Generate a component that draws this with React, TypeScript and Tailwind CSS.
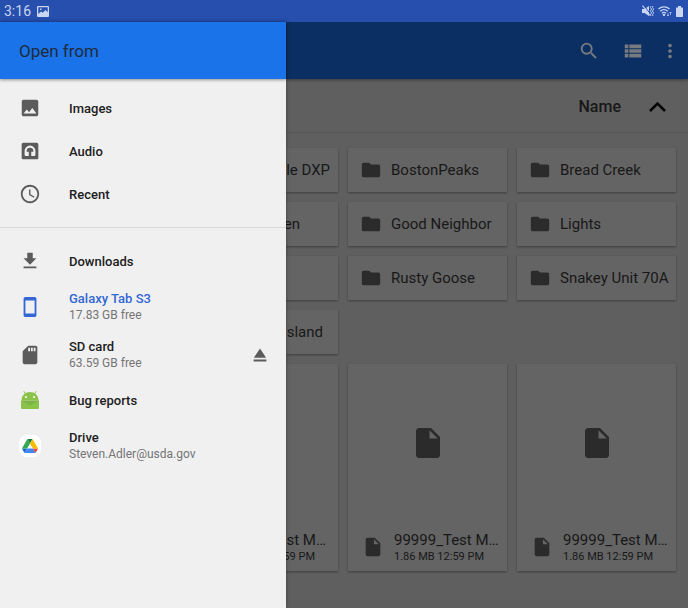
import type { ReactNode } from 'react';

type IconProps = { className?: string; d: string };

function Icon({ className = '', d }: IconProps) {
  return (
    <svg viewBox="0 0 24 24" fill="currentColor" fillRule="evenodd" aria-hidden="true" className={`shrink-0 ${className}`}>
      <path d={d} />
    </svg>
  );
}

const paths = {
  image: 'M21 19V5c0-1.100-.9-2-2-2H5c-1.100 0-2 .9-2 2v14c0 1.100.9 2 2 2h14c1.100 0 2-.9 2-2zM8.500 13.500l2.500 3.010L14.500 12l4.500 6H5l3.500-4.500z',
  recent:
    'M11.990 2C6.470 2 2 6.480 2 12s4.470 10 9.990 10C17.520 22 22 17.520 22 12S17.520 2 11.990 2zM12 20c-4.420 0-8-3.580-8-8s3.580-8 8-8 8 3.580 8 8-3.580 8-8 8zM12.500 7H11v6l5.250 3.150.75-1.230-4.500-2.670z',
  audio:
    'M4 2h16c1.100 0 2 .9 2 2v16c0 1.100-.9 2-2 2H4c-1.100 0-2-.9-2-2V4c0-1.100.9-2 2-2zM12 5.500a6.500 6.500 0 0 0-6.500 6.500v4.500c0 .8.700 1.500 1.500 1.500h3.500v-5H8v-1a4 4 0 0 1 8 0v1h-2.500v5H17c.8 0 1.500-.7 1.500-1.500V12A6.500 6.500 0 0 0 12 5.500z',
  download: 'M19 9h-4V3H9v6H5l7 7 7-7zM5 18v2h14v-2H5z',
  phone: 'M17 1H7c-1.100 0-2 .9-2 2v18c0 1.100.9 2 2 2h10c1.100 0 2-.9 2-2V3c0-1.100-.9-2-2-2zm0 18H7V5h10v14z',
  sd: 'M18 2h-8L4 8v12c0 1.100.9 2 2 2h12c1.100 0 2-.9 2-2V4c0-1.100-.9-2-2-2zm-6 6h-2V4h2v4zm3 0h-2V4h2v4zm3 0h-2V4h2v4z',
  eject: 'M5 17h14v2H5zM12 5L5.330 15h13.340z',
  folder: 'M10 4H4c-1.100 0-2 .9-2 2v12c0 1.100.9 2 2 2h16c1.100 0 2-.9 2-2V8c0-1.100-.9-2-2-2h-8l-2-2z',
  file: 'M6 2c-1.100 0-2 .9-2 2v16c0 1.100.9 2 2 2h12c1.100 0 2-.9 2-2V8l-6-6H6zm7 7V3.500L18.500 9H13z',
  search:
    'M15.500 14h-.79l-.28-.27A6.471 6.471 0 0 0 16 9.500 6.500 6.500 0 1 0 9.500 16c1.610 0 3.090-.59 4.230-1.570l.27.28v.79l5 4.990L20.490 19l-4.990-5zm-6 0C7.010 14 5 11.990 5 9.500S7.010 5 9.500 5 14 7.010 14 9.500 11.990 14 9.500 14z',
  list: 'M3 14h4v-4H3v4zm0 5h4v-4H3v4zM3 9h4V5H3v4zm5 5h13v-4H8v4zm0 5h13v-4H8v4zM8 5v4h13V5H8z',
  more: 'M12 8c1.100 0 2-.9 2-2s-.9-2-2-2-2 .9-2 2 .9 2 2 2zm0 2c-1.100 0-2 .9-2 2s.9 2 2 2 2-.9 2-2-.9-2-2-2zm0 6c-1.100 0-2 .9-2 2s.9 2 2 2 2-.9 2-2-.9-2-2-2z',
};

function AndroidIcon() {
  return (
    <svg viewBox="0 0 20 20" className="h-5 w-5" aria-hidden="true">
      <path d="M4 1.500 5.500 4M16 1.500 14.500 4" stroke="#8bc34a" strokeWidth="1" strokeLinecap="round" />
      <path d="M1.500 10a8.500 8 0 0 1 17 0z" fill="#8bc34a" />
      <circle cx="6" cy="7" r="1" fill="#fff" />
      <circle cx="14" cy="7" r="1" fill="#fff" />
      <path d="M1 10.500h18V18a1 1 0 0 1-1 1H2a1 1 0 0 1-1-1z" fill="#8bc34a" />
      <path d="M1 10.500h18l-9 5z" fill="#7cb342" />
    </svg>
  );
}

function DriveIcon() {
  return (
    <span className="flex h-[22px] w-[22px] items-center justify-center rounded-lg bg-white">
      <svg viewBox="0 0 87.3 78" className="h-[14px] w-4" aria-hidden="true">
        <path d="m6.600 66.850 3.850 6.650c.8 1.400 1.950 2.500 3.300 3.300l13.750-23.800h-27.500c0 1.550.4 3.100 1.200 4.500z" fill="#1967d2" />
        <path d="m43.650 25-13.750-23.800c-1.350.8-2.500 1.900-3.300 3.300l-25.400 44a9.060 9.060 0 0 0 -1.200 4.500h27.500z" fill="#34a853" />
        <path d="m73.550 76.800c1.350-.8 2.500-1.900 3.300-3.300l1.600-2.750 7.650-13.250c.8-1.400 1.200-2.950 1.200-4.500h-27.502l5.852 11.500z" fill="#ea4335" />
        <path d="m43.650 25 13.750-23.800c-1.350-.8-2.900-1.200-4.500-1.200h-18.500c-1.600 0-3.150.45-4.500 1.200z" fill="#188038" />
        <path d="m59.800 53h-32.300l-13.750 23.800c1.350.8 2.900 1.200 4.500 1.200h50.800c1.600 0 3.150-.45 4.500-1.200z" fill="#4285f4" />
        <path d="m73.400 26.500-12.700-22c-.8-1.400-1.950-2.500-3.300-3.300l-13.750 23.800 16.150 28h27.450c0-1.550-.4-3.100-1.200-4.500z" fill="#fbbc04" />
      </svg>
    </span>
  );
}

function StatusBar() {
  return (
    <div className="flex h-[22px] items-center bg-[#264fae] pr-[5px] pl-1 text-[#c9d5f1]">
      <span className="text-sm leading-5">3:16</span>
      <svg viewBox="0 0 12 11" className="ml-[6px] h-[11px] w-3" aria-hidden="true">
        <path fillRule="evenodd" fill="currentColor" d="M1 0h10a1 1 0 0 1 1 1v9a1 1 0 0 1-1 1H1a1 1 0 0 1-1-1V1a1 1 0 0 1 1-1zm.3 1.300v6.700L4 5.500l1.700 1.300L8.500 4l2.200 2.200V1.300zM3 2.500h1.500V4H3z" />
      </svg>
      <div className="ml-auto flex items-center gap-1">
        <svg viewBox="0 0 12 12" className="h-3 w-3" aria-hidden="true" fill="none" stroke="currentColor">
          <path d="M0 4h2.500L7 1v10L2.500 8H0z" fill="currentColor" stroke="none" />
          <path d="m1.500 0 7 9" stroke="#264fae" />
          <path d="m.5.500 7.500 10" strokeWidth="1.200" />
          <path d="m9 1-.5 1.500 1 1.500-1 2 1 2-1 1.500L9 11M11 1l-.5 1.500 1 1.500-1 2 1 2-1 1.500.5 1.500" strokeWidth=".9" />
        </svg>
        <svg viewBox="0 0 14 12" className="h-3 w-3.5" aria-hidden="true" fill="none" stroke="currentColor">
          <path d="M.5 4a8.300 8.300 0 0 1 11 0M2.300 6.200a5.500 5.500 0 0 1 7.400 0M4 8.200a3 3 0 0 1 4 0" strokeWidth="1.300" />
          <path d="M5 9.500h2L6 11z" fill="currentColor" />
          <path d="M10 8v3m-1-1 1 1 1-1M12.500 10V7m-1 1 1-1 1 1" strokeWidth=".7" />
        </svg>
        <svg viewBox="0 0 7 11" className="h-[11px] w-[7px]" aria-hidden="true" fill="currentColor">
          <path d="M2 0h3v1.500h1.500L7 2v8.500l-.5.500h-6L0 10.500V2l.5-.5H2z" />
        </svg>
      </div>
    </div>
  );
}

type RootItemProps = { icon: ReactNode; title: string; detail?: string; active?: boolean };

function RootItem({ icon, title, detail, active }: RootItemProps) {
  return (
    <button type="button" className={`flex min-w-0 flex-1 items-center text-left ${detail ? 'h-12' : 'h-[43px]'}`}>
      <span className="flex w-[59px] shrink-0 justify-center pb-px">{icon}</span>
      <span className="ml-[10px] flex min-w-0 flex-col">
        <span className={`text-[13px] leading-4 font-medium ${active ? 'text-[#3367d6]' : 'text-[#202020]'}`}>{title}</span>
        {detail && <span className="text-xs leading-4 text-[#757575]">{detail}</span>}
      </span>
    </button>
  );
}

function Drawer() {
  const gray = 'text-[#5b5b5b]';
  return (
    <aside className="z-10 flex w-[286px] shrink-0 flex-col bg-[#f0f0f0] shadow-[0_0_4px_rgba(0,0,0,0.35)]">
      <header className="flex h-[57px] items-center bg-[#1a73e8] pl-[19px] shadow-[0_1px_3px_rgba(0,0,0,0.4)]">
        <h1 className="text-[17px] leading-6 text-[#202b3a]">Open from</h1>
      </header>
      <nav aria-label="Storage locations">
        <ul className="border-b border-[#d8d8d8] pt-2 pb-[11px]">
          <li className="flex"><RootItem title="Images" icon={<Icon d={paths.image} className={`h-[22px] w-[22px] ${gray}`} />} /></li>
          <li className="flex"><RootItem title="Audio" icon={<Icon d={paths.audio} className={`h-5 w-5 ${gray}`} />} /></li>
          <li className="flex"><RootItem title="Recent" icon={<Icon d={paths.recent} className={`h-[22px] w-[22px] ${gray}`} />} /></li>
        </ul>
        <ul className="pt-3">
          <li className="flex"><RootItem title="Downloads" icon={<Icon d={paths.download} className={`h-[22px] w-[22px] ${gray}`} />} /></li>
          <li className="flex"><RootItem active title="Galaxy Tab S3" detail="17.83 GB free" icon={<Icon d={paths.phone} className="h-[22px] w-[22px] text-[#3367d6]" />} /></li>
          <li className="flex items-center pr-[15px]">
            <RootItem title="SD card" detail="63.59 GB free" icon={<Icon d={paths.sd} className={`h-[22px] w-[22px] ${gray}`} />} />
            <button type="button" aria-label="Eject SD card"><Icon d={paths.eject} className={`h-[22px] w-[22px] ${gray}`} /></button>
          </li>
          <li className="flex"><RootItem title="Bug reports" icon={<AndroidIcon />} /></li>
          <li className="flex"><RootItem title="Drive" detail="Steven.Adler@usda.gov" icon={<DriveIcon />} /></li>
        </ul>
      </nav>
    </aside>
  );
}

const card = 'bg-[#646464] shadow-[0_1px_2px_rgba(0,0,0,0.35)]';

function Folder({ name }: { name: string }) {
  return (
    <button type="button" className={`flex h-11 items-center pl-3 text-left ${card}`}>
      <Icon d={paths.folder} className="h-[22px] w-[22px] text-[#2b2b2b]" />
      <span className="ml-[9px] text-[15px] leading-5 whitespace-nowrap">{name}</span>
    </button>
  );
}

function ClippedFolder({ name, pad }: { name: string; pad: string }) {
  return (
    <button type="button" className={`flex h-11 items-center justify-end text-[15px] leading-5 whitespace-nowrap ${pad} ${card}`}>
      {name}
    </button>
  );
}

function FileCard() {
  return (
    <button type="button" className={`flex h-[207px] flex-col text-left ${card}`}>
      <span className="flex w-full flex-1 items-center justify-center">
        <Icon d={paths.file} className="h-9 w-9 text-[#2b2b2b]" />
      </span>
      <span className="flex h-[49px] w-full items-start pl-[14px]">
        <Icon d={paths.file} className="mt-[14px] h-[22px] w-[22px] text-[#2b2b2b]" />
        <span className="ml-[10px] flex flex-col pt-2 whitespace-nowrap">
          <span className="text-[15px] leading-5">99999_Test M…</span>
          <span className="text-[11px] leading-[14px]">1.86 MB 12:59 PM</span>
        </span>
      </span>
    </button>
  );
}

function Browser() {
  return (
    <main className="flex min-w-0 flex-1 flex-col overflow-hidden bg-[#5f5f5f] text-[#181818]">
      <header className="flex h-[57px] shrink-0 items-center justify-end gap-[22px] bg-[#0b2f62] pr-[7px] text-[#777b80] shadow-[0_1px_3px_rgba(0,0,0,0.4)]">
        <button type="button" aria-label="Search"><Icon d={paths.search} className="h-[22px] w-[22px]" /></button>
        <button type="button" aria-label="List view"><Icon d={paths.list} className="h-[22px] w-[22px]" /></button>
        <button type="button" aria-label="More options" className="-ml-[7px]"><Icon d={paths.more} className="h-[22px] w-[22px]" /></button>
      </header>
      <div className="flex h-[54px] shrink-0 items-center justify-end border-b border-[#555555] pt-[3px] pr-[22px]">
        <button type="button" className="flex items-center gap-7 text-base leading-6 font-medium">
          Name
          <svg viewBox="0 0 17 10" className="h-[10px] w-[17px]" fill="none" stroke="#050505" strokeWidth="2.500" aria-hidden="true">
            <path d="m1 9 7.500-7.500L16 9" />
          </svg>
        </button>
      </div>
      <div className="grid grid-cols-[52px_minmax(0,1fr)_minmax(0,1fr)] gap-[10px] pt-[15px] pr-3">
        <ClippedFolder name="le DXP" pad="pr-2" />
        <Folder name="BostonPeaks" />
        <Folder name="Bread Creek" />
        <ClippedFolder name="en" pad="pr-[38px]" />
        <Folder name="Good Neighbor" />
        <Folder name="Lights" />
        <div className={`h-11 ${card}`} />
        <Folder name="Rusty Goose" />
        <Folder name="Snakey Unit 70A" />
        <ClippedFolder name="sland" pad="pr-[15px]" />
      </div>
      <div className="grid grid-cols-[52px_minmax(0,1fr)_minmax(0,1fr)] gap-[10px] pt-[10px] pr-3 pb-9">
        <button type="button" className={`flex h-[207px] flex-col items-end justify-end pb-[7px] whitespace-nowrap ${card}`}>
          <span className="pr-3 text-[15px] leading-5">st M…</span>
          <span className="pr-[23px] text-[11px] leading-[14px]">59 PM</span>
        </button>
        <FileCard />
        <FileCard />
      </div>
    </main>
  );
}

export default function App() {
  return (
    <div className="flex min-h-screen flex-col font-[Roboto,sans-serif]">
      <StatusBar />
      <div className="flex flex-1">
        <Drawer />
        <Browser />
      </div>
    </div>
  );
}
